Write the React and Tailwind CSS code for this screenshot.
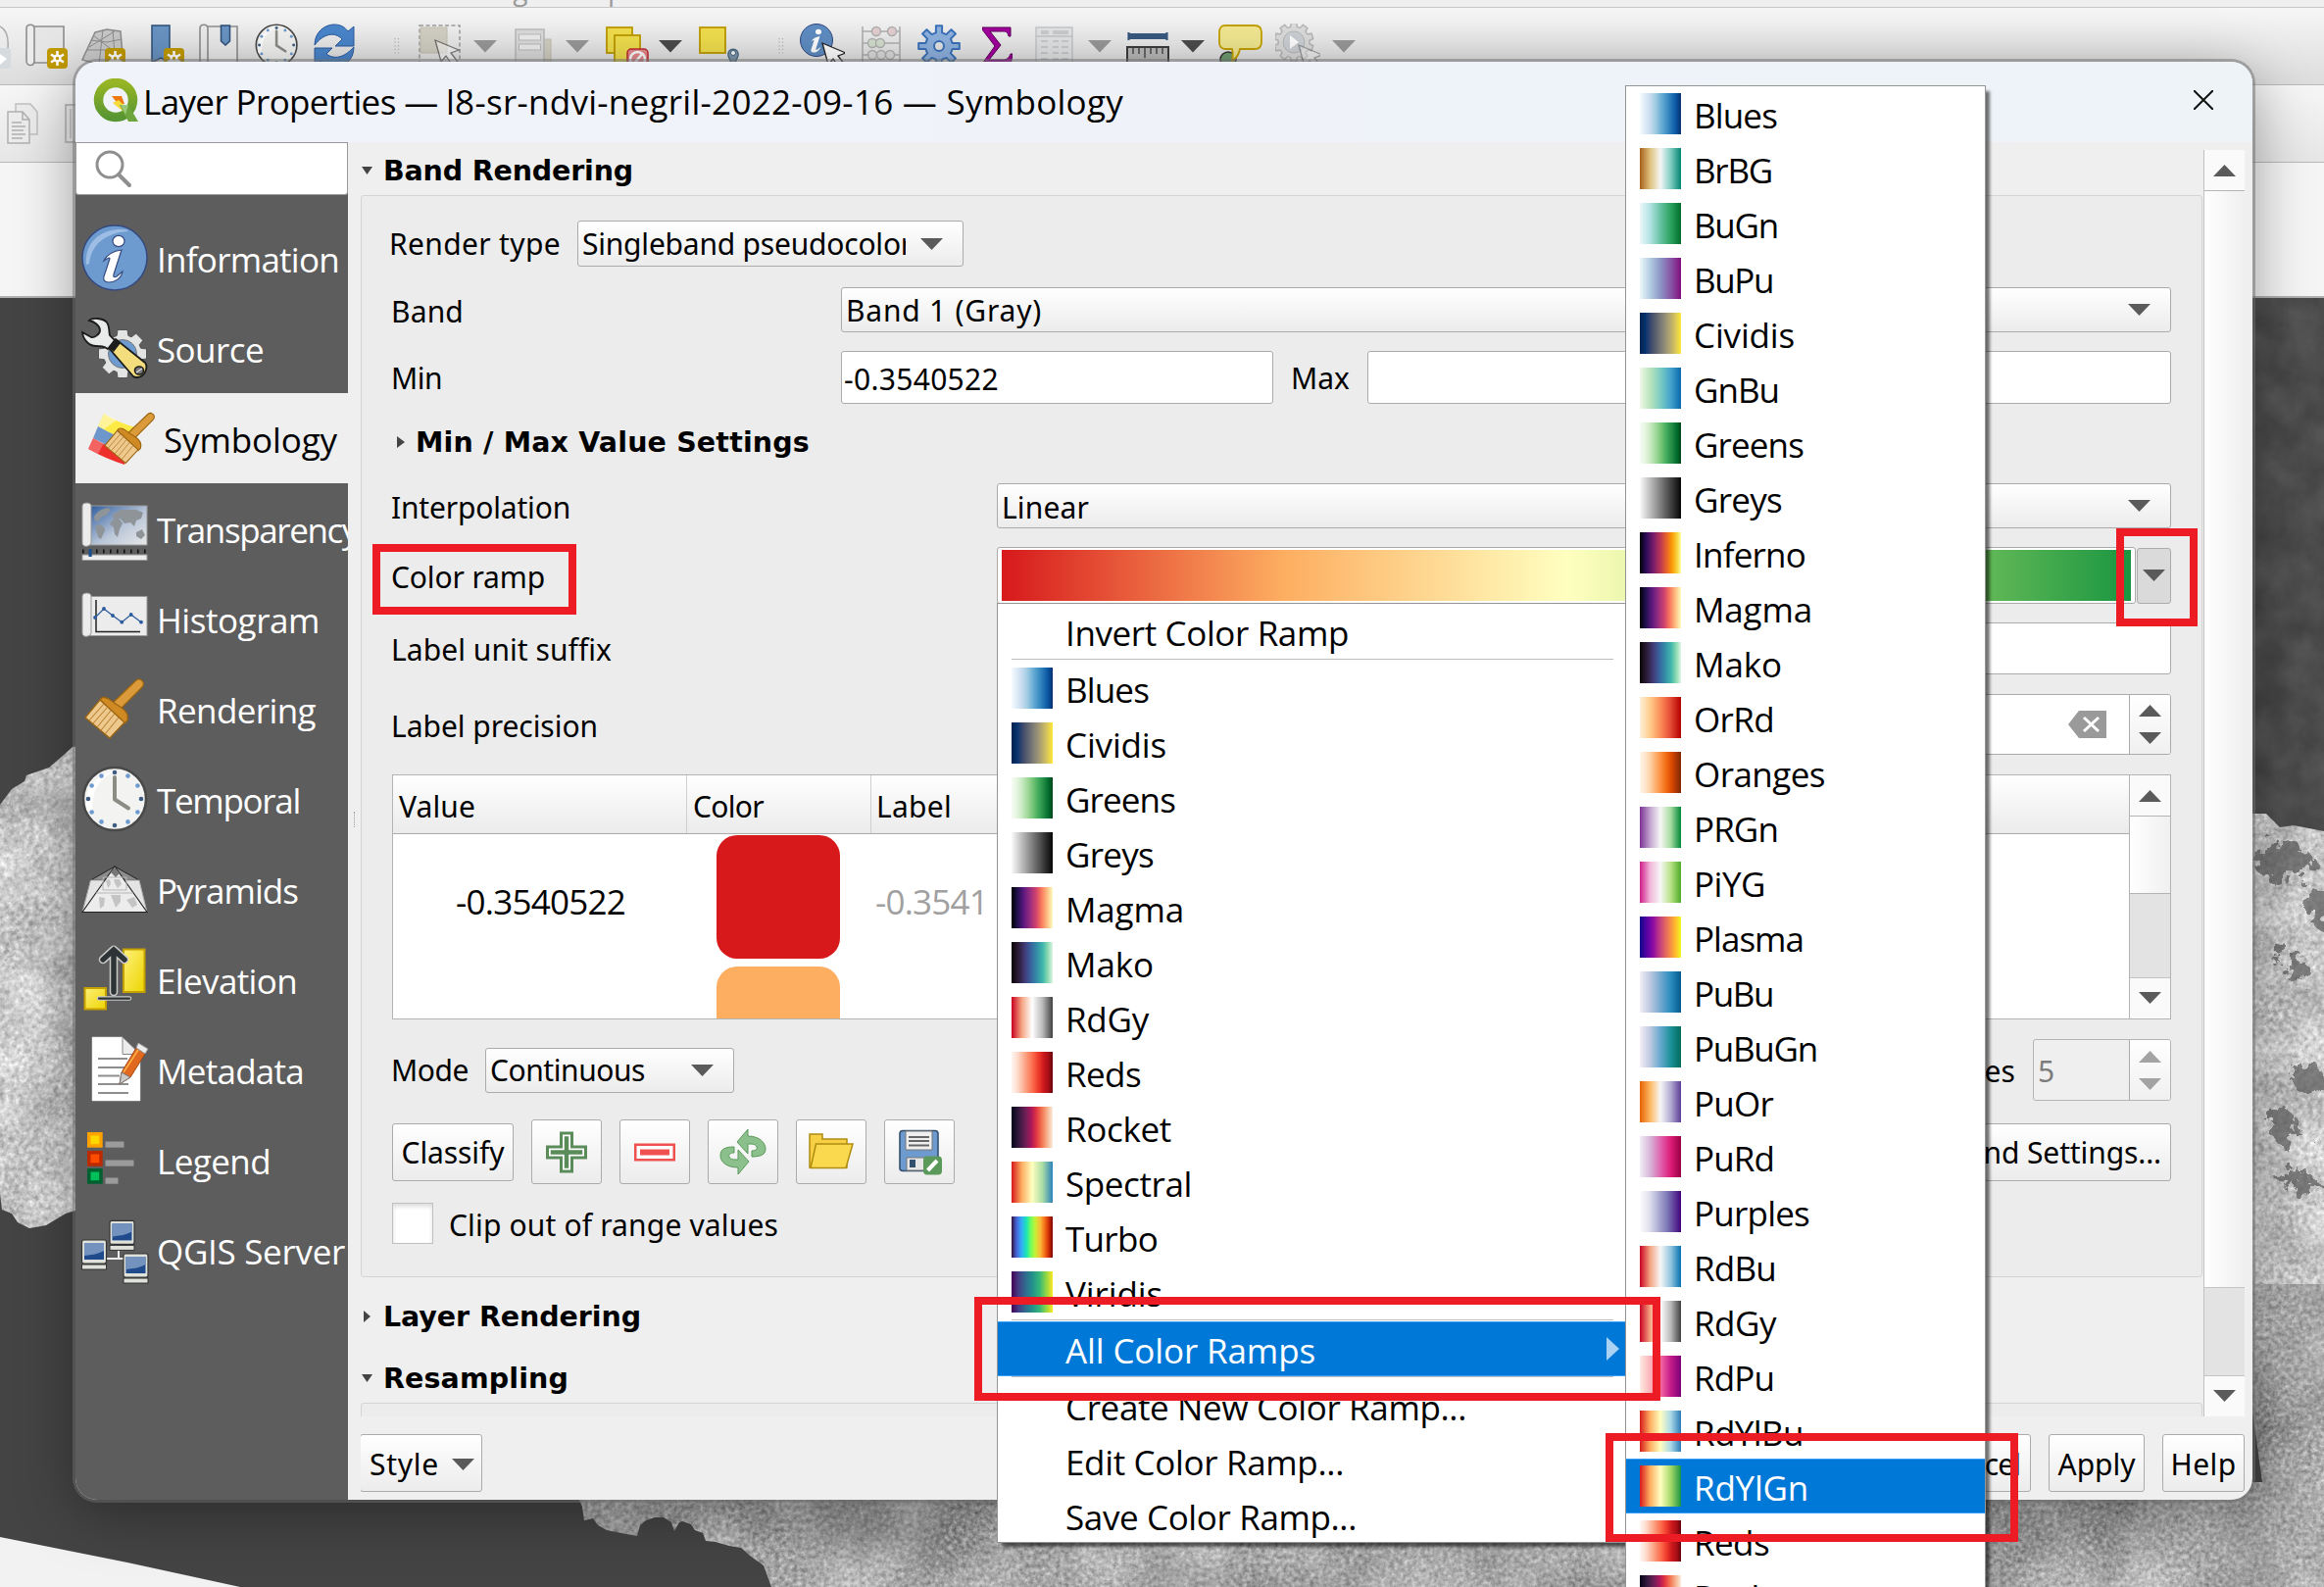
import { useLayoutEffect, useRef, useState } from "react";

const UI = "font-['Noto_Sans',sans-serif] text-[30px] leading-[40px]";
const SEGOE = "font-['Open_Sans',sans-serif] text-[35px] leading-[46px]";
const BOLD = "font-['DejaVu_Sans',sans-serif] text-[28.5px] font-bold";

/* Single line of text whose tracking is adjusted so that it spans `w` pixels. */
function Fit({ w, children, className = "" }) {
  const ref = useRef(null);
  const [ls, setLs] = useState(0);
  useLayoutEffect(() => {
    const natural = ref.current.getBoundingClientRect().width - ls * children.length;
    setLs((w - natural) / children.length);
  }, [w, children]);
  return (
    <span ref={ref} className={"inline-block whitespace-pre shrink-0 " + className} style={{ letterSpacing: ls }}>
      {children}
    </span>
  );
}

const RAMPS = {
  Blues: "#f7fbff,#deebf7 13%,#c6dbef 26%,#9ecae1 39%,#6baed6 52%,#4292c6 65%,#2171b5 78%,#08519c 90%,#08306b",
  BrBG: "#a6611a,#dfc27d 25%,#f5f5f5 50%,#80cdc1 75%,#018571",
  BuGn: "#edf8fb,#b2e2e2 25%,#66c2a4 50%,#2ca25f 75%,#006d2c",
  BuPu: "#edf8fb,#b3cde3 25%,#8c96c6 50%,#8856a7 75%,#810f7c",
  Cividis: "#00224e,#083370 14%,#35456c 25%,#575d6d 37%,#7d7c78 52%,#a59c74 68%,#d2c060 84%,#fee838",
  GnBu: "#f0f9e8,#bae4bc 25%,#7bccc4 50%,#43a2ca 75%,#0868ac",
  Greens: "#f7fcf5,#e5f5e0 13%,#c7e9c0 26%,#a1d99b 39%,#74c476 52%,#41ab5d 65%,#238b45 78%,#006d2c 90%,#00441b",
  Greys: "#fafafa,#050505",
  Inferno: "#000004,#2b0b57 15%,#781c6d 33%,#bb3754 50%,#ed6925 67%,#fb9b06 78%,#f7d13d 90%,#fcffa4",
  Magma: "#000004,#221150 15%,#5f187f 30%,#982d80 45%,#d3436e 60%,#f8765c 72%,#feba80 86%,#fcfdbf",
  Mako: "#0b0405,#2e1e3c 18%,#413d7b 33%,#37659e 48%,#348fa7 62%,#40b7ad 76%,#8ad9b1 88%,#def5e5",
  OrRd: "#fef0d9,#fdcc8a 25%,#fc8d59 50%,#e34a33 75%,#b30000",
  Oranges: "#fff5eb,#fee6ce 13%,#fdd0a2 26%,#fdae6b 39%,#fd8d3c 52%,#f16913 65%,#d94801 78%,#a63603 90%,#7f2704",
  PRGn: "#7b3294,#c2a5cf 25%,#f7f7f7 50%,#a6dba0 75%,#008837",
  PiYG: "#d01c8b,#f1b6da 25%,#f7f7f7 50%,#b8e186 75%,#4dac26",
  Plasma: "#0d0887,#5302a3 16%,#8b0aa5 32%,#b83289 45%,#db5c68 59%,#f48849 73%,#febd2a 87%,#f0f921",
  PuBu: "#f1eef6,#bdc9e1 25%,#74a9cf 50%,#2b8cbe 75%,#045a8d",
  PuBuGn: "#f6eff7,#bdc9e1 25%,#67a9cf 50%,#1c9099 75%,#016c59",
  PuOr: "#e66101,#fdb863 25%,#f7f7f7 50%,#b2abd2 75%,#5e3c99",
  PuRd: "#f1eef6,#d7b5d8 25%,#df65b0 50%,#dd1c77 75%,#980043",
  Purples: "#fcfbfd,#efedf5 13%,#dadaeb 26%,#bcbddc 39%,#9e9ac8 52%,#807dba 65%,#6a51a3 78%,#54278f 90%,#3f007d",
  RdBu: "#ca0020,#f4a582 25%,#f7f7f7 50%,#92c5de 75%,#0571b0",
  RdGy: "#ca0020,#f4a582 25%,#ffffff 50%,#bababa 75%,#404040",
  RdPu: "#feebe2,#fbb4b9 25%,#f768a1 50%,#c51b8a 75%,#7a0177",
  RdYlBu: "#d7191c,#fdae61 25%,#ffffbf 50%,#abd9e9 75%,#2c7bb6",
  RdYlGn: "#d7191c,#fdae61 25%,#ffffc0 50%,#a6d96a 75%,#1a9641",
  Reds: "#fff5f0,#fee0d2 13%,#fcbba1 26%,#fc9272 39%,#fb6a4a 52%,#ef3b2c 65%,#cb181d 78%,#a50f15 90%,#67000d",
  Rocket: "#03051a,#35193e 18%,#701f57 35%,#ad1759 48%,#e13342 60%,#f37651 74%,#f6b48f 87%,#faebdd",
  Spectral: "#d7191c,#fdae61 25%,#ffffbf 50%,#abdda4 75%,#2b83ba",
  Turbo: "#30123b,#4662d7 12%,#36aaf9 24%,#1ae4b6 36%,#72fe5e 47%,#c7ef34 58%,#faba39 70%,#f66b19 81%,#ca2a04 91%,#7a0403",
  Viridis: "#440154,#443a83 16%,#31688e 33%,#21908c 50%,#35b779 68%,#8fd744 84%,#fde725",
};

const FAVORITES = [
  ["Blues", 83], ["Cividis", 101], ["Greens", 110], ["Greys", 88], ["Magma", 119], ["Mako", 88],
  ["RdGy", 83], ["Reds", 75], ["Rocket", 106], ["Spectral", 127], ["Turbo", 92], ["Viridis", 97],
];
const ALL = [
  ["Blues", 83], ["BrBG", 78], ["BuGn", 84], ["BuPu", 79], ["Cividis", 101], ["GnBu", 85], ["Greens", 110],
  ["Greys", 88], ["Inferno", 112], ["Magma", 119], ["Mako", 88], ["OrRd", 80], ["Oranges", 132], ["PRGn", 84],
  ["PiYG", 71], ["Plasma", 110], ["PuBu", 79], ["PuBuGn", 124], ["PuOr", 79], ["PuRd", 80], ["Purples", 116],
  ["RdBu", 82], ["RdGy", 82], ["RdPu", 80], ["RdYlBu", 110], ["RdYlGn", 115], ["Reds", 75], ["Rocket", 106],
];

function MenuItem({ name, w, ramp, selected, children }) {
  return (
    <div
      className={
        "flex h-14 shrink-0 items-center pl-3.5 " +
        (selected ? "border-y border-[#3ba0f5] bg-[#0078d7] text-white" : "text-black")
      }
    >
      <div
        className="h-[42px] w-[42px] shrink-0"
        style={ramp ? { backgroundImage: `linear-gradient(to right, ${RAMPS[name]})` } : undefined}
      />
      <Fit w={w + 2} className="ml-[13px] pt-[3px]">{name}</Fit>
      {children}
    </div>
  );
}

const Rule = ({ className = "" }) => (
  <div className={"mx-3.5 mb-px h-px shrink-0 bg-[#bdbdbd] " + className} />
);

function Tri({ dir = "down", w = 23, h = 12, color = "#5a5a5a", className = "" }) {
  const pts = dir === "down" ? "0,0 24,0 12,12" : dir === "up" ? "0,12 24,12 12,0" : "0,0 24,6 0,12";
  return (
    <svg width={w} height={h} viewBox="0 0 24 12" preserveAspectRatio="none" className={"shrink-0 " + className}>
      <polygon points={pts} fill={color} />
    </svg>
  );
}

const RAISED = "border border-[#ababab] rounded-[3px] bg-linear-to-b from-white to-[#ececec]";
const FIELD = "border border-[#ababab] rounded-[3px] bg-white";

function Combo({ className, children, arrow = "mr-[20px]" }) {
  return (
    <div className={"flex items-center justify-between overflow-hidden pl-[4px] " + RAISED + " " + className}>
      {children}
      <Tri className={arrow} />
    </div>
  );
}

function Spin({ disabled, className = "" }) {
  const c = disabled ? "#a3a3a3" : "#5a5a5a";
  return (
    <div className={"flex h-full w-[42px] flex-col items-center justify-center gap-4 border-l border-[#ababab] bg-linear-to-b from-white to-[#f0f0f0] " + className}>
      <Tri dir="up" color={c} />
      <Tri color={c} />
    </div>
  );
}

/* ---------- sidebar icons, all drawn on a 68 px square ---------- */

const Box = ({ children }) => (
  <svg width="68" height="68" viewBox="0 0 68 68" className="shrink-0 overflow-visible">{children}</svg>
);

const InfoIcon = () => (
  <Box>
    <circle cx="34" cy="34" r="33" fill="#6d9bcf" stroke="#34497f" strokeWidth="1.5" />
    <path d="M5 41C3 20 18 5 40 5c6 0 8 1 8 2C28 8 10 18 8 40z" fill="#a9c6e8" opacity=".8" />
    <ellipse cx="38" cy="17" rx="6" ry="5.6" fill="#fff" stroke="#34497f" strokeWidth="1.2" />
    <path d="M23 37c3-6 10-10 18-11l-8 25c-1 3 1 3 3 2l6-5c-1 7-8 11-14 11-5 0-6-3-5-6l6-18c0-2-3 0-6 2z" fill="#fff" stroke="#34497f" strokeWidth="1.2" />
  </Box>
);

const gear = (n, ro, ri, cx, cy, hw = 0.2) => {
  const p = [];
  for (let i = 0; i < n; i++) {
    const a = (i * 2 * Math.PI) / n - Math.PI / 2;
    [[-hw * 1.5, ri], [-hw, ro], [hw, ro], [hw * 1.5, ri]].forEach(([d, r]) =>
      p.push(`${(cx + r * Math.cos(a + d)).toFixed(1)},${(cy + r * Math.sin(a + d)).toFixed(1)}`)
    );
  }
  return p.join(" ");
};

const SourceIcon = () => (
  <Box>
    <polygon points={gear(8, 25, 19.5, 42, 40)} fill="#e3e5e4" stroke="#555" strokeWidth="1" />
    <circle cx="42" cy="40" r="14.5" fill="#6d9bcf" stroke="#777" strokeWidth="1" />
    <path d="M28 34L35 25 65 49c3 4 1 14-8 15-2 0-3 0-4-1z" fill="#f3dd7c" stroke="#1c1c1c" strokeWidth="1.8" />
    <path d="M35 25l-7 9 5 4 7-9z" fill="#1c1c1c" />
    <path d="M8 6c3-3 14-3 18 2 3 4 2 10 3 13l5 5-7 9c-4-3-7-3-12-3C8 32 2 26 1 18l9 5c3 1 9-3 9-7 0-5-6-9-11-10z" fill="#e9ecea" stroke="#1c1c1c" strokeWidth="1.8" />
    <ellipse cx="59" cy="57" rx="4.5" ry="4" fill="#777" stroke="#1c1c1c" strokeWidth="1.6" />
    <path d="M56 59l6-4" stroke="#ddd" strokeWidth="1.4" />
  </Box>
);

const Brush = () => (
  <g stroke="#9a6410" strokeWidth="1.3">
    <path d="M40 34L62 12c4-5-2-10-6-7L32 28z" fill="#dc9b3b" />
    <path d="M19 25c2-4 5-3 9-1l7 5 6 4c6 4 7 9 6 13l-3 3z" fill="#cf8a24" />
    <path d="M4 43L19 25 44 48 29 64z" fill="#eec98d" />
    <path d="M8 46l15-17M12 49l15-17M16 53l14-17M20 56l14-17M24 60l14-17" stroke="#b98437" strokeWidth="1.1" />
  </g>
);

const SymbologyIcon = () => (
  <Box>
    <path d="M16 9Q30 18 48 23L44 38Q28 32 10 22z" fill="#fdea45" />
    <path d="M16 9L10 22 16 25 30 15z" fill="#fff" opacity=".45" />
    <path d="M10 22Q28 32 44 38L40 50Q22 44 5 34z" fill="#6d96cb" />
    <path d="M5 34Q22 44 40 50L37 61Q18 55 0 45z" fill="#ef2f2c" />
    <path d="M5 34L0 45 10 50 16 39z" fill="#fff" opacity=".25" />
    <g transform="translate(13.5 5) scale(.85)"><Brush /></g>
  </Box>
);

const Scroll = ({ b = 52 }) => (
  <path d={`M1 11c0-4 9-4 9 0v${b - 15}c0 5-9 6-9 1z`} fill="#ececec" stroke="#999" strokeWidth="1" />
);

const Continents = ({ fill }) => (
  <g fill={fill}>
    <path d="M13 22c3-5 8-8 14-9l3 2-5 6-4 1-3 4-4 1zM15 31c4-2 9 1 9 5l-4 9-3-2c0-4-3-6-2-12zM31 26l7-2 4 5-3 6-2 8-3-3-1-7-4-3zM32 20l8-5 16 0 7 3-2 6-5 2-2 6-4-4-6 1-4-5-7 1zM56 38l6-3 3 6-4 4-5-3z" />
  </g>
);

const TransparencyIcon = () => (
  <Box>
    <defs>
      <linearGradient id="tr" x1="0" y1="0" x2="1" y2="1">
        <stop offset="0" stopColor="#2d5b9d" /><stop offset=".55" stopColor="#b9c6d8" /><stop offset="1" stopColor="#e8e8e8" />
      </linearGradient>
    </defs>
    <rect x="9" y="11" width="58" height="40" fill="url(#tr)" stroke="#999" />
    <Continents fill="#8f9499" />
    <Scroll />
    <path d="M1 57.5h66" stroke="#111" strokeWidth="4" strokeDasharray="1.6 5.4" />
    <rect x="1" y="61" width="66" height="5.5" fill="#ececec" stroke="#999" />
    <rect x="7.5" y="55" width="3.2" height="8" fill="#1d4f8f" />
  </Box>
);

const HistogramIcon = () => (
  <Box>
    <rect x="9" y="11.5" width="58" height="40" fill="#ececec" stroke="#999" />
    <Scroll />
    <path d="M15 15v32.500h45" fill="none" stroke="#222" strokeWidth="1.5" />
    <path d="M14 33l9-9 9 7 9.300 6.700L50.700 30 61 37.700" fill="none" stroke="#2d5b9d" strokeWidth="1.3" />
    {[[14, 33], [23, 24], [32, 31], [41.3, 37.700], [50.7, 30], [61, 37.7]].map(([x, y]) => (
      <circle key={x} cx={x} cy={y} r="1.900" fill="#2d5b9d" />
    ))}
  </Box>
);

const RenderingIcon = () => <Box><Brush /></Box>;

const ClockFace = () => (
  <>
    <circle cx="34" cy="34" r="32" fill="#f3f4f2" stroke="#484848" strokeWidth="2.500" />
    <path d="M5 45C3 22 16 8 36 5 20 12 10 22 11 50z" fill="#fff" />
    {Array.from({ length: 12 }, (_, i) => (
      <circle
        key={i}
        cx={34 + 27 * Math.sin((i * Math.PI) / 6)}
        cy={34 - 27 * Math.cos((i * Math.PI) / 6)}
        r="2.300"
        fill={i % 3 ? "#6d9bcf" : "#3e5d80"}
      />
    ))}
    <path d="M34 12v22.500l14 9" fill="none" stroke="#8b8d85" strokeWidth="4" strokeLinecap="round" strokeLinejoin="round" />
  </>
);
const TemporalIcon = () => <Box><ClockFace /></Box>;

const PyramidsIcon = () => (
  <Box>
    <path d="M34 11L9.500 25h49.500z" fill="#8c8c8c" stroke="#222" />
    <path d="M9.500 25L1 57.500h66L59 25z" fill="#e4e4e4" stroke="#aaa" />
    <path d="M34 11L1 57.500h66z" fill="#ececec" stroke="#222" strokeWidth="1.100" />
    <path d="M22 22h24v13H22zM15 38h38" fill="none" stroke="#b5b5b5" />
    <path d="M25 25l4-1 1 5-3 4zM33 24l6 0 2 5-4 4-3-5zM18 42l6 1-1 8-4 3zM30 40l10 0 0 7-5 6-3-8zM46 45l8-3 3 8-5 3z" fill="#c4c4c4" />
    <path d="M30 17l4-5 5 6-4 4z" fill="#777" />
  </Box>
);

const ElevationIcon = () => (
  <Box>
    <defs>
      <linearGradient id="yl" x1="0" y1="0" x2="1" y2="1"><stop offset="0" stopColor="#fff07a" /><stop offset="1" stopColor="#ecd500" /></linearGradient>
    </defs>
    <rect x="43" y="3.500" width="21.500" height="43.500" fill="url(#yl)" stroke="#c4a000" strokeWidth="2" />
    <rect x="3.500" y="43" width="21.500" height="21.500" fill="url(#yl)" stroke="#c4a000" strokeWidth="2" />
    <g fill="none" strokeLinecap="round" strokeLinejoin="round">
      <path d="M33 47V4M22 14L33 4l11 10" stroke="#c9c9c9" strokeWidth="8.500" />
      <path d="M33 47V5M22 14L33 4l11 10" stroke="#2e3436" strokeWidth="5.500" strokeLinejoin="miter" />
      <path d="M18 53.600h31" stroke="#c9c9c9" strokeWidth="4.500" />
      <path d="M18 53.600h31" stroke="#2e3436" strokeWidth="2.300" />
    </g>
  </Box>
);

const MetadataIcon = () => (
  <Box>
    <path d="M11 1h31l18 18v47H11z" fill="#fff" stroke="#ddd" strokeWidth=".5" />
    <path d="M42 1v17.500h18z" fill="#ececec" stroke="#888" />
    <path d="M17 23h30M17 32h27M17 40.500h22M17 49h31M17 58h31" stroke="#8e8e8e" strokeWidth="2" />
    <path d="M39 49l2-12L56 12l9 6-15 24z" fill="#e0691f" stroke="#a4460f" />
    <path d="M43 37l15-23" stroke="#ffb347" strokeWidth="1.500" />
    <path d="M39 49l2-12 9 5z" fill="#c9c9c9" stroke="#777" />
    <path d="M56 12l2-5 10 6-3 5z" fill="#ececec" stroke="#999" />
  </Box>
);

const LegendIcon = () => (
  <Box>
    {[[6, "#ffa200", "#ffd800", 19], [25, "#bd2a00", "#ff4d00", 29], [43, "#00602f", "#00c05a", 13]].map(([y, a, b, l]) => (
      <g key={y}>
        <rect x="6" y={y} width="15.700" height="15.700" fill={a} />
        <rect x="9.500" y={y + 3.5} width="8.700" height="8.700" fill={b} />
        <rect x="24.500" y={y + 9.5} width={l} height="6.200" fill="#9b9b9b" />
      </g>
    ))}
  </Box>
);

const Monitor = ({ x, y }) => (
  <g transform={`translate(${x} ${y})`}>
    <rect x="0" y="0" width="25" height="24" rx="2" fill="#dfe2da" stroke="#333" strokeWidth="1.200" />
    <rect x="2.500" y="3" width="20" height="17" fill="#1f4a8c" />
    <path d="M2.500 3h20v8c-7 4-13 4-20 5z" fill="#7392bd" />
    <rect x="0" y="25" width="25" height="5" fill="#dfe2da" stroke="#333" />
  </g>
);
const ServerIcon = () => (
  <Box>
    <path d="M24 43h20M38 34v9" stroke="#ececec" strokeWidth="2" />
    <Monitor x="29" y="4.400" /><Monitor x=".5" y="24" /><Monitor x="43" y="38" />
  </Box>
);

const PAGES = [
  ["Information", 186, InfoIcon], ["Source", 109, SourceIcon], ["Symbology", 177, SymbologyIcon],
  ["Transparency", 205, TransparencyIcon], ["Histogram", 166, HistogramIcon], ["Rendering", 162, RenderingIcon],
  ["Temporal", 146, TemporalIcon], ["Pyramids", 144, PyramidsIcon], ["Elevation", 143, ElevationIcon],
  ["Metadata", 150, MetadataIcon], ["Legend", 116, LegendIcon], ["QGIS Server", 192, ServerIcon],
];

function Sidebar() {
  return (
    <div className={"flex w-[278px] shrink-0 flex-col overflow-hidden bg-[#5d5d5d] text-white " + SEGOE}>
      <div className="h-[54px] shrink-0 rounded-b-[3px] border border-[#9a9a9a] bg-white pl-[19px] pt-1.5">
        <svg width="40" height="40" viewBox="0 0 40 40" fill="none" stroke="#8f8f8f" strokeWidth="3">
          <circle cx="15" cy="16" r="13" /><path d="M24 26l11 11" strokeWidth="4" strokeLinecap="round" />
        </svg>
      </div>
      <div className="flex flex-col pt-[18px]">
        {PAGES.map(([name, w, Icon]) => {
          const on = name === "Symbology";
          return (
            <div key={name} className={"flex h-[92px] items-center " + (on ? "bg-[#efefef] pl-[13px] text-black" : "pl-1.5")}>
              <Icon />
              <Fit w={w} className="ml-[9px] pt-[3px]">{name}</Fit>
            </div>
          );
        })}
      </div>
    </div>
  );
}

/* ---------- main window toolbar ---------- */

const Star = ({ x, y }) => (
  <g transform={`translate(${x} ${y})`}>
    <rect width="21" height="21" rx="4" fill="#c29b00" />
    <path d="M10.500 3v15M4 6.500l13 8M17 6.500l-13 8" stroke="#fff" strokeWidth="2.600" />
    <circle cx="10.500" cy="10.500" r="4" fill="#fff" /><circle cx="10.500" cy="10.500" r="1.700" fill="#c29b00" />
  </g>
);
const Cursor = ({ x, y, o = 1 }) => (
  <path transform={`translate(${x} ${y})`} opacity={o} d="M0 0l6 22 5-6 7 10 5-4-7-9 8-3z" fill="#fff" stroke="#222" strokeWidth="1.300" />
);
const Ico = ({ w, className = "", children }) => (
  <svg width={w} height="48" viewBox={`0 0 ${w} 48`} className={"shrink-0 " + className}>{children}</svg>
);
const Drop = ({ dark, className }) => (
  <Ico w={24} className={className}><path d="M0 17h24L12 29.500z" fill={dark ? "#4c4c4c" : "#999"} /></Ico>
);
const Grip = ({ className }) => (
  <Ico w={6} className={className}><path d="M1 15v17M4.500 15v17" stroke="#b5b5b5" strokeWidth="1.200" strokeDasharray="1.200 2.400" /></Ico>
);
const SwirlArrows = ({ a = "#4a86cc", b = "#2d5b9d" }) => (
  <g fill={a} stroke={b}>
    <path d="M1 22C1 8 12 1 21 1c7 0 11 3 14 7l6-5v20H22l7-7C22 8 10 10 1 22z" />
    <path d="M41 24c0 14-11 21-20 21-7 0-11-3-14-7l-6 5V25h18l-6 6c8 6 18 4 28-7z" />
  </g>
);

function Toolbar() {
  return (
    <div className="flex h-[79px] items-start border-b border-[#b9b9b9] bg-linear-to-b from-[#f6f6f6] to-[#dcdcdc] pt-4">
      <Ico w={11}>
        <path d="M0 3c6 3 9 10 8 22" fill="none" stroke="#aaa" strokeWidth="1.500" />
        <path d="M0 25h8q3 0 3 4v13q0 4-3 4H0z" fill="#d5dade" /><path d="M0 31l7 5-7 6z" fill="#fff" />
      </Ico>
      <Ico w={44} className="ml-[15px]">
        <path d="M8 3h31v37H8z" fill="#e6e6e6" stroke="#8e8e8e" strokeWidth="1.600" />
        <path d="M1 5c0-5 8-5 8 0v33c0 6-8 6-8 0z" fill="#ececec" stroke="#8e8e8e" strokeWidth="1.600" />
        <Star x={22} y={25} />
      </Ico>
      <Ico w={46} className="ml-[13px]">
        <path d="M14 9l12-3 14 2 3 36-20-1-22-6z" fill="#c9c9c9" stroke="#8e8e8e" strokeWidth="1.500" />
        <path d="M10 17l16 2 15-3M6 27l18 0 18 1M22 6l-4 36M32 7l3 36M12 12l26 20M8 24L34 8" fill="none" stroke="#8e8e8e" />
        <Star x={24} y={25} />
      </Ico>
      <Ico w={35} className="ml-[25px]">
        <path d="M1 2h18v38l-9-5-9 5z" fill="#6a94c4" stroke="#2d4f78" strokeWidth="1.500" /><Star x={13} y={25} />
      </Ico>
      <Ico w={40} className="ml-3.5">
        <path d="M8 3h31v40H8z" fill="#ececec" stroke="#8e8e8e" strokeWidth="1.600" />
        <path d="M1 5c0-5 8-5 8 0v38H1z" fill="#ececec" stroke="#8e8e8e" strokeWidth="1.600" />
        <path d="M22.500 2h9v16l-4.500 4-4.500-4z" fill="#6a94c4" stroke="#2d4f78" strokeWidth="1.500" />
      </Ico>
      <Ico w={44} className="ml-[17px]"><g transform="scale(.65)"><ClockFace /></g></Ico>
      <Ico w={42} className="ml-4"><SwirlArrows /></Ico>
      <Grip className="ml-10" />
      <Ico w={44} className="ml-[19px]">
        <path d="M1 2h41v44H1z" fill="none" stroke="#9c9c9c" strokeWidth="1.500" strokeDasharray="4 2.500" />
        <rect x="2" y="4" width="27" height="26" fill="#d2cfc4" stroke="#c4bfae" />
        <Cursor x={17} y={17} o={0.55} />
      </Ico>
      <Drop className="ml-3" />
      <Ico w={38} className="ml-[18px]">
        <rect x="8" y="16" width="29" height="26" fill="#d2cfc4" stroke="#c4bfae" />
        <rect x="1" y="6" width="29" height="36" fill="#dcdcdc" stroke="#bbb" strokeWidth="1.500" />
        <rect x="4.500" y="11" width="22" height="6" fill="#eee" stroke="#bbb" /><rect x="4.500" y="21" width="22" height="6" fill="#eee" stroke="#bbb" />
      </Ico>
      <Drop className="ml-3.5" />
      <Ico w={44} className="ml-[17px]">
        <rect x="1" y="4" width="26" height="26" fill="#f1df4d" stroke="#bd9a00" strokeWidth="1.800" />
        <rect x="9" y="12" width="26" height="28" fill="#f1df4d" stroke="#bd9a00" strokeWidth="1.800" />
        <rect x="22" y="26" width="21" height="21" rx="4" fill="#e58a8f" stroke="#c0282d" strokeWidth="1.500" />
        <circle cx="32.500" cy="36.500" r="7.500" fill="none" stroke="#fff" strokeWidth="2.500" /><path d="M28 42l9-11" stroke="#fff" strokeWidth="2.500" />
      </Ico>
      <Drop dark className="ml-2.5" />
      <Ico w={42} className="ml-[17px]">
        <rect x="1" y="4" width="26" height="26" fill="#f1df4d" stroke="#bd9a00" strokeWidth="1.800" />
        <path d="M35 45l-5-12c-2-9 12-9 10 0z" fill="#7c97ad" stroke="#47657e" strokeWidth="1.300" /><circle cx="35" cy="30" r="2.500" fill="#fff" stroke="#47657e" />
      </Ico>
      <Grip className="ml-[39px]" />
      <Ico w={46} className="ml-4">
        <g transform="scale(.5)"><circle cx="34" cy="34" r="33" fill="#5f8dc3" stroke="#34497f" strokeWidth="2" /><ellipse cx="38" cy="17" rx="6" ry="5.600" fill="#fff" />
          <path d="M23 37c3-6 10-10 18-11l-8 25c-1 3 1 3 3 2l6-5c-1 7-8 11-14 11-5 0-6-3-5-6l6-18c0-2-3 0-6 2z" fill="#fff" /></g>
        <Cursor x={23} y={20} />
      </Ico>
      <Ico w={40} className="ml-[17px]">
        <path d="M1 3v43M39 3v43M1 8h38M1 20h38M1 32h38" fill="none" stroke="#b0b0b0" strokeWidth="1.600" />
        {[[15, 8, "#e3cfcf"], [31, 8, "#e3cfcf"], [11, 20, "#d5e0d0"], [19, 20, "#d5e0d0"], [11, 32, "#ddd"], [20, 32, "#ddd"], [29, 32, "#ddd"]].map(([x, y, f], i) => (
          <ellipse key={i} cx={x} cy={y} rx="4.500" ry="4.500" fill={f} stroke="#b0b0b0" strokeWidth="1.400" />
        ))}
      </Ico>
      <Ico w={44} className="ml-[17px]">
        <polygon points={gear(8, 21, 14, 22, 23, 0.15)} fill="#8fb2e0" stroke="#3a72ba" strokeWidth="2" strokeLinejoin="round" />
        <circle cx="22" cy="23" r="5" fill="#e6e6e6" stroke="#3a72ba" strokeWidth="2" />
      </Ico>
      <Ico w={31} className="ml-[22px]">
        <path d="M0 4h29v9h-2c-1-4-2-5-6-5H8l11 14L7 37h14c5 0 6-2 8-6h2l-2 12H0v-2l13-18L0 6z" fill="#a3009e" stroke="#5b0058" />
      </Ico>
      <Ico w={40} className="ml-[23px]">
        <rect x="1" y="4" width="37" height="42" fill="#e3e4e5" stroke="#c3c6c9" strokeWidth="1.500" />
        <path d="M1 13h37" stroke="#c3c6c9" strokeWidth="1.500" />
        <path d="M6 9h8M18 9h16" stroke="#c9cbcd" strokeWidth="4" /><path d="M6 18h7M18 18h6M27 18h7M6 24h7M18 24h6M27 24h7M6 30h7M18 30h6M27 30h7M6 36h7M18 36h6M27 36h7" stroke="#c9cbcd" strokeWidth="1.800" />
      </Ico>
      <Drop className="ml-3.5" />
      <Ico w={44} className="ml-[15px]">
        <path d="M2 13h40M2.500 9v8M41.500 9v8" stroke="#39597f" strokeWidth="2.200" /><path d="M3 13h38" stroke="#39597f" strokeWidth="6" />
        <rect x="1" y="24" width="42" height="20" fill="#b9b9b9" stroke="#3d3d3d" strokeWidth="2" />
        <path d="M7 25v6M13 25v6M19 25v10M25 25v6M31 25v6M37 25v6" stroke="#3d3d3d" strokeWidth="1.300" />
      </Ico>
      <Drop dark className="ml-3" />
      <Ico w={45} className="ml-3.5">
        <circle cx="10" cy="37" r="8" fill="#6f9f6f" stroke="#333" strokeWidth="1.500" />
        <path d="M7 2h30q7 0 7 7v10q0 7-7 7H22c-1 6-3 9-8 12 1-5 1-8 0-12H7q-6 0-6-7V9q0-7 6-7z" fill="#f2e891" stroke="#c4a000" strokeWidth="1.800" />
      </Ico>
      <Ico w={46} className="ml-[13px]">
        <polygon points={gear(10, 20, 16, 19, 19, 0.14)} fill="#dcdcdc" stroke="#b8b8b8" strokeWidth="1.500" />
        <circle cx="19" cy="19" r="11" fill="#cdd1d6" stroke="#b8b8b8" /><path d="M15 12l9 7-9 7z" fill="#fff" />
        <Cursor x={24} y={22} o={0.35} />
      </Ico>
      <Drop className="ml-3" />
    </div>
  );
}

/* ---------- satellite raster behind the dialog ---------- */

function MapCanvas() {
  return (
    <svg width="2371" height="1315" viewBox="0 304 2371 1315" className="block shrink-0">
      <defs>
        <filter id="land" x="0" y="0" width="100%" height="100%" colorInterpolationFilters="sRGB">
          <feTurbulence type="fractalNoise" baseFrequency=".012 .01" numOctaves="3" seed="8" result="a" />
          <feTurbulence type="fractalNoise" baseFrequency=".22" numOctaves="4" seed="5" result="b" />
          <feComposite in="a" in2="b" operator="arithmetic" k2=".45" k3=".55" result="n" />
          <feColorMatrix in="n" values=".75 0 0 0 .29  .75 0 0 0 .29  .75 0 0 0 .29  0 0 0 0 1" />
          <feComposite in2="SourceGraphic" operator="in" />
        </filter>
        <filter id="landLight" x="0" y="0" width="100%" height="100%" colorInterpolationFilters="sRGB">
          <feTurbulence type="fractalNoise" baseFrequency=".02" numOctaves="3" seed="15" result="a" />
          <feTurbulence type="fractalNoise" baseFrequency=".2" numOctaves="4" seed="9" result="b" />
          <feComposite in="a" in2="b" operator="arithmetic" k2=".4" k3=".6" result="n" />
          <feColorMatrix in="n" values=".7 0 0 0 .44  .7 0 0 0 .44  .7 0 0 0 .44  0 0 0 0 1" />
          <feComposite in2="SourceGraphic" operator="in" />
        </filter>
        <filter id="sea" x="0" y="0" width="100%" height="100%" colorInterpolationFilters="sRGB">
          <feTurbulence type="fractalNoise" baseFrequency=".03" numOctaves="4" seed="3" />
          <feColorMatrix values=".12 0 0 0 .24  .12 0 0 0 .24  .12 0 0 0 .24  0 0 0 0 1" />
        </filter>
        <filter id="rough"><feTurbulence type="fractalNoise" baseFrequency=".07" numOctaves="4" /><feDisplacementMap in="SourceGraphic" scale="44" /></filter>
      </defs>
      <rect x="0" y="304" width="2371" height="1315" fill="#444" />
      <rect x="2290" y="304" width="81" height="600" filter="url(#sea)" />
      <path filter="url(#landLight)" d="M0 821l12-16 13-8 2-6 23-8 14-12 10-9 13-2v472l-20 6-20 12-17 3-12-6-6-9-10-4-2-16z" />
      <path filter="url(#landLight)" d="M2280 830h32l14 14 14-2 31 6v471h-91z" />
      <path filter="url(#land)" d="M2280 1310h91v309H787l-8-22-14-10-9-8-12-2-14-4-10-1-3-8-8-3-4-6-9-3-3 1-5 9-3-9-8-5-9 0-9 3-6 5-3 11-16-3-15-3-9-5-5-7-9 2-2-14-7-15v-10h1721z" />
      <g fill="#5a5a5a" opacity=".7" filter="url(#rough)">
        <ellipse cx="2330" cy="880" rx="30" ry="20" /><ellipse cx="2370" cy="925" rx="20" ry="20" />
        <ellipse cx="2340" cy="985" rx="12" ry="16" /><ellipse cx="2355" cy="1100" rx="18" ry="16" />
        <ellipse cx="2330" cy="1150" rx="16" ry="16" /><ellipse cx="2345" cy="1205" rx="20" ry="9" />
      </g>
      <path d="M0 1568l130 26 115 25H0z" fill="#f2f2f2" />
    </svg>
  );
}

/* ---------- dialog ---------- */

const LBL = "pl-[30px]";

function ValueTable() {
  const head = "flex h-full items-center border-r border-[#cfcfcf] pl-1.5 pt-1";
  return (
    <div className="ml-[31px] mr-[31px] mt-5 flex h-[250px] shrink-0 overflow-hidden border border-[#b4b4b4] bg-white">
      <div className="flex flex-1 flex-col overflow-hidden">
        <div className="flex h-[60px] shrink-0 border-b border-[#ababab] bg-linear-to-b from-white to-[#ebebeb]">
          <div className={head + " w-[300px]"}><Fit w={78}>Value</Fit></div>
          <div className={head + " w-[188px]"}><Fit w={72}>Color</Fit></div>
          <div className="flex h-full items-center pl-[5px] pt-1"><Fit w={77}>Label</Fit></div>
        </div>
        <div className="flex flex-1 overflow-hidden">
          <div className={"flex w-[300px] justify-end pr-[63px] pt-[46px] " + SEGOE}><Fit w={173}>-0.3540522</Fit></div>
          <div className="flex w-[188px] flex-col items-start gap-2 pl-[30px] pt-px">
            <div className="h-[126px] w-[126px] shrink-0 rounded-[21px] bg-[#d7191c]" />
            <div className="h-[126px] w-[126px] shrink-0 rounded-[21px] bg-[#fdae61]" />
          </div>
          <div className={"pl-[4px] pt-[46px] text-[#a0a0a0] " + SEGOE}><Fit w={115}>-0.3541</Fit></div>
        </div>
      </div>
      <div className="flex w-[42px] shrink-0 flex-col border-l border-[#b4b4b4] bg-[#e3e3e3]">
        <div className="flex h-[42px] items-center justify-center border-b border-[#b4b4b4] bg-[#fafafa]"><Tri dir="up" /></div>
        <div className="h-[79px] border-b border-[#b4b4b4] bg-linear-to-r from-white to-[#f0f0f0]" />
        <div className="h-[85px]" />
        <div className="flex flex-1 items-center justify-center border-t border-[#c4c4c4] bg-[#fafafa]"><Tri className="-mt-0.5" /></div>
      </div>
    </div>
  );
}

const ToolButton = ({ children, className }) => (
  <div className={"flex h-[66px] w-[72px] items-center justify-center " + RAISED + " " + className}>
    <svg width="48" height="48" viewBox="0 0 48 48">{children}</svg>
  </div>
);

function BandRendering() {
  return (
    <div className="mr-px flex h-[1104px] shrink-0 flex-col rounded-[3px] border border-[#d4d4d4] bg-[#ececec]">
      <div className={"mt-[25px] flex h-[47px] items-center " + LBL}>
        <Fit w={175} className="-ml-0.5 pt-px">Render type</Fit>
        <Combo className="ml-[17px] h-[47px] w-[394px]">
          <div className="w-[330px] overflow-hidden pt-px"><Fit w={337}>Singleband pseudocolor</Fit></div>
        </Combo>
      </div>
      <div className={"mt-[21px] flex h-[46px] items-center " + LBL}>
        <div className="w-[459px] pt-[3px]"><Fit w={74}>Band</Fit></div>
        <Combo className="h-[46px] w-[1357px]"><Fit w={200} className="pt-0.5">Band 1 (Gray)</Fit></Combo>
      </div>
      <div className={"mt-[19px] flex h-[54px] items-center " + LBL}>
        <div className="w-[459px] pt-0.5"><Fit w={52}>Min</Fit></div>
        <div className={"flex h-[54px] w-[441px] items-center pl-0.5 pt-[3px] " + FIELD}><Fit w={158}>-0.3540522</Fit></div>
        <Fit w={60} className="ml-[18px] pt-0.5">Max</Fit>
        <div className={"ml-[18px] h-[54px] w-[820px] " + FIELD} />
      </div>
      <div className={"mt-[17px] flex h-[46px] items-center pl-9 " + BOLD}>
        <Tri dir="right" w={8} h={12} color="#444" className="-mt-0.5 mr-[11px]" />
        <Fit w={402} className="pb-px">Min / Max Value Settings</Fit>
      </div>
      <div className={"mt-[18px] flex h-[46px] items-center " + LBL}>
        <div className="w-[618px] pt-1"><Fit w={183}>Interpolation</Fit></div>
        <Combo className="h-[46px] w-[1198px]"><Fit w={89} className="pt-[3px]">Linear</Fit></Combo>
      </div>
      <div className={"mt-[19px] flex h-[58px] items-center " + LBL}>
        <div className="w-[618px] pt-1"><Fit w={157}>Color ramp</Fit></div>
        <div className={"h-[58px] w-[1162px] px-1 py-0.5 " + FIELD}>
          <div className="h-full" style={{ backgroundImage: `linear-gradient(to right, ${RAMPS.RdYlGn})` }} />
        </div>
        <div className="ml-px flex h-[57px] w-[35px] items-center justify-center rounded-[3px] border border-[#ababab] bg-[#dadada]"><Tri /></div>
      </div>
      <div className={"mt-[19px] flex h-[53px] items-center " + LBL}>
        <div className="w-[618px] pt-[3px]"><Fit w={225}>Label unit suffix</Fit></div>
        <div className={"h-[53px] w-[1198px] " + FIELD} />
      </div>
      <div className={"mt-5 flex h-[62px] items-center " + LBL}>
        <div className="w-[618px] pt-1"><Fit w={211}>Label precision</Fit></div>
        <div className={"flex h-[62px] w-[1198px] items-center justify-end overflow-hidden " + FIELD}>
          <svg width="40" height="30" viewBox="0 0 40 30" className="mr-[22px]">
            <path d="M0 15L11 1h28v28H11z" fill="#9a9a9a" /><path d="M16 8l15 14M31 8L16 22" stroke="#fff" strokeWidth="3" />
          </svg>
          <Spin />
        </div>
      </div>
      <ValueTable />
      <div className={"mt-5 flex h-[63px] shrink-0 items-center justify-between pr-[31px] " + LBL}>
        <div className="flex items-center">
          <Fit w={79} className="pt-px">Mode</Fit>
          <Combo className="ml-[17px] h-[46px] w-[254px]"><Fit w={158}>Continuous</Fit></Combo>
        </div>
        <div className="flex items-center">
          <Fit w={104} className="mr-[18px] pt-0.5">Classes</Fit>
          <div className="flex h-[63px] w-[141px] items-center justify-between overflow-hidden rounded-[3px] border border-[#b4b4b4] bg-[#efefef] pl-1 text-[#7c7c7c]">
            <span className="pt-0.5">5</span>
            <Spin disabled />
          </div>
        </div>
      </div>
      <div className="mt-[19px] flex h-[66px] shrink-0 items-center pl-[31px] pr-[31px]">
        <div className={"flex h-[59px] w-[124px] items-center justify-center pt-0.5 " + RAISED}><Fit w={105}>Classify</Fit></div>
        <ToolButton className="ml-[18px]">
          <path d="M17 3.500h14v14h14v14H31v14H17v-14H3v-14h14z" fill="#5a8c5a" /><path d="M20 6.500h8v14h14v8H28v14h-8v-14H6v-8h14z" fill="#fff" />
          <path d="M22.500 9h3v14h14v3h-14v14h-3V26h-14v-3h14z" fill="#5a8c5a" stroke="#5a8c5a" strokeWidth="1.500" />
        </ToolButton>
        <ToolButton className="ml-[18px]">
          <path d="M3 15.500h42v18H3z" fill="#f05050" /><path d="M5.500 18h37v13h-37z" fill="#fff" /><path d="M9 21.500h30v6H9z" fill="#f05050" />
        </ToolButton>
        <ToolButton className="ml-[18px]">
          <g fill="#8bbf8b" stroke="#5a995a" strokeWidth="1">
            <path d="M18 14L29 1v7c12 0 18 7 18 13s-5 8-14 8v-6c4 0 6-2 5-4-1-3-5-3-9-3v10z" />
            <path d="M30 34L19 47v-7C7 40 1 34 1 28c0-7 5-9 14-9v6c-4 0-6 2-5 4 1 3 5 3 9 3V22z" />
          </g>
        </ToolButton>
        <ToolButton className="ml-[18px]">
          <path d="M2 6h13v5h25v29H2z" fill="#f6cf45" stroke="#b08c10" strokeWidth="1.500" /><path d="M8.500 16H46l-7 24.500H3z" fill="#fbd94f" stroke="#b08c10" strokeWidth="1.500" />
        </ToolButton>
        <ToolButton className="ml-[18px]">
          <rect x="4" y="2.500" width="39" height="41" rx="3" fill="#6d9bcf" stroke="#34506f" strokeWidth="1.600" />
          <path d="M10 3h27v19H10z" fill="#efefef" stroke="#777" /><path d="M13 9h21M13 13h21M13 17.500h21" stroke="#666" strokeWidth="1.800" />
          <rect x="11" y="30" width="20" height="13" fill="#e6e6e6" stroke="#777" /><rect x="14" y="32" width="6" height="8" fill="#34506f" />
          <rect x="28" y="28.500" width="19" height="19" rx="4" fill="#5a995a" /><path d="M32.500 43L42 33" stroke="#fff" strokeWidth="4" />
        </ToolButton>
        <div className={"ml-auto flex h-[59px] items-center px-[9px] pt-0.5 " + RAISED}><Fit w={249}>Legend Settings...</Fit></div>
      </div>
      <div className="mt-[19px] flex h-[42px] shrink-0 items-center pl-[31px]">
        <div className="h-[42px] w-[42px] border border-[#c0c0c0] bg-white shadow-[inset_0_3px_4px_#ddd]" />
        <Fit w={336} className="ml-[16px] pt-[3px]">Clip out of range values</Fit>
      </div>
    </div>
  );
}

const Heading = ({ open, w, children, className }) => (
  <div className={"flex shrink-0 items-center pl-px " + BOLD + " " + className}>
    <div className="w-[22px] shrink-0">
      {open ? <Tri w={11} h={8} color="#444" className="-mt-1" /> : <Tri dir="right" w={7} h={12} color="#444" className="-mt-1 ml-0.5" />}
    </div>
    <Fit w={w} className="pb-[3px]">{children}</Fit>
  </div>
);

const FootButton = ({ children, w, className }) => (
  <div className={"flex h-[59px] items-center justify-center pt-0.5 " + RAISED + " " + className}><Fit w={w}>{children}</Fit></div>
);

function Dialog() {
  return (
    <div className="absolute left-[77px] top-[63px] flex h-[1467px] w-[2221px] flex-col overflow-hidden rounded-[22px] bg-[#efefef] text-black">
      <div className="flex h-[82px] shrink-0 items-center justify-between bg-linear-to-r from-[#f0f3fa] to-[#eef3f8] pl-[18px] pr-10">
        <div className={"flex items-center pb-[3px] " + SEGOE}>
          <svg width="47" height="46" viewBox="0 0 47 46" className="shrink-0">
            <defs><linearGradient id="q" x1="0" y1="0" x2="0" y2="1"><stop offset="0" stopColor="#97b524" /><stop offset="1" stopColor="#589632" /></linearGradient></defs>
            <circle cx="23" cy="22" r="17.500" fill="none" stroke="url(#q)" strokeWidth="9.500" />
            <path d="M19 18h10l3 8-6 1z" fill="#ee7913" /><path d="M20 25l6-3 5 5 0 7z" fill="#f5dc3c" />
            <path d="M27 27h9l10 17H36z" fill="#6ea53c" /><path d="M28 27h8l-3 10z" fill="#9cc97a" />
          </svg>
          <div className="ml-1 flex pt-[3px]">
            <Fit w={309}>{"Layer Properties — "}</Fit>
            <Fit w={691}>l8-sr-ndvi-negril-2022-09-16 — Symbology</Fit>
          </div>
        </div>
        <svg width="20" height="20" viewBox="0 0 20 20" className="mb-1"><path d="M0 0l20 20M20 0L0 20" stroke="#111" strokeWidth="2" /></svg>
      </div>
      <div className="flex flex-1 overflow-hidden">
        <Sidebar />
        <div className="flex w-[13px] shrink-0 items-center justify-center pb-1">
          <div className="h-4 w-px border-l border-dotted border-[#999]" />
        </div>
        <div className={"flex flex-1 flex-col overflow-hidden " + UI}>
          <div className="flex h-[1300px] shrink-0 overflow-hidden">
            <div className="flex flex-1 flex-col overflow-hidden">
              <Heading open w={255} className="h-[54px] pt-[8px]">Band Rendering</Heading>
              <BandRendering />
              <Heading w={263} className="mt-1 h-[70px] pt-1.5">Layer Rendering</Heading>
              <Heading open w={189} className="h-[54px] pt-2">Resampling</Heading>
              <div className="mr-px h-10 shrink-0 rounded-[3px] border border-[#d4d4d4] bg-[#ececec]" />
            </div>
            <div className="mt-2 flex w-[42px] shrink-0 flex-col border-l border-[#c0c0c0] bg-[#e3e3e3]">
              <div className="flex h-[42px] items-center justify-center border-b border-[#b4b4b4] bg-[#fafafa]"><Tri dir="up" /></div>
              <div className="h-[1119px] border-b border-[#c4c4c4] bg-linear-to-r from-white to-[#efefef]" />
              <div className="flex-1" />
              <div className="flex h-[42px] items-center justify-center border-t border-[#c4c4c4] bg-[#fafafa]"><Tri className="-mt-0.5" /></div>
            </div>
            <div className="w-2 shrink-0" />
          </div>
          <div className="flex flex-1 items-start pr-2 pt-[18px]">
            <div className={"-ml-px flex h-[59px] w-[125px] items-center justify-between pl-[9px] pr-[7px] pt-0.5 " + RAISED}>
              <Fit w={71}>Style</Fit><Tri />
            </div>
            <FootButton w={88} className="ml-auto w-[110px]">Cancel</FootButton>
            <FootButton w={79} className="ml-[18px] w-[98px]">Apply</FootButton>
            <FootButton w={67} className="ml-[18px] w-[84px]">Help</FootButton>
          </div>
        </div>
      </div>
    </div>
  );
}

const Mark = ({ className }) => <div className={"absolute border-8 border-[#ed1c24] " + className} />;

export default function App() {
  return (
    <div className="relative flex h-[1619px] w-[2371px] flex-col overflow-hidden bg-[#efefef]">
      <div className="flex h-[7px] shrink-0 items-end gap-[38px] overflow-hidden pl-[394px] font-['Open_Sans',sans-serif] text-[28px] leading-[38px] text-[#9a9a9a]">
        <Fit w={145} className="-mb-px">Processing</Fit>
        <Fit w={60} className="-mb-px">Help</Fit>
      </div>
      <div className="h-px shrink-0 bg-[#c8c8c8]" />
      <Toolbar />
      <div className="flex h-[79px] shrink-0 items-center border-b border-[#b9b9b9] bg-linear-to-b from-[#f6f6f6] to-[#e6e6e6] pl-[7px]">
        <svg width="70" height="42" viewBox="0 0 70 42" fill="#ececec" stroke="#c0c0c0" strokeWidth="1.500">
          <path d="M9 1h15l7 8v23H9z" /><path d="M1 9h15l7 8v24H1z" stroke="#b0b0b0" /><path d="M16 9v8h7M5 20h10M5 24h14M5 28h12M5 32h14M5 36h11" fill="none" stroke="#b0b0b0" />
          <rect x="60" y="2" width="22" height="38" stroke="#b0b0b0" /><path d="M65 6v30" />
        </svg>
      </div>
      <div className="h-[138px] shrink-0 border-b-2 border-[#b0b0b0] bg-[#f5f5f5]" />
      <MapCanvas />

      <div className="absolute left-[77px] top-[63px] h-[1467px] w-[2221px] rounded-[22px] shadow-[0_0_0_3px_rgba(110,110,110,0.5),0_12px_60px_rgba(0,0,0,0.38)]" />
      <Dialog />

      <div className={"absolute left-[1017px] top-[615px] flex h-[959px] w-[644px] flex-col border border-[#949494] bg-white shadow-[5px_5px_3px_-1px_rgba(0,0,0,0.55)] " + SEGOE}>
        <MenuItem name="Invert Color Ramp" w={287} />
        <Rule />
        {FAVORITES.map(([n, w]) => <MenuItem key={n} name={n} w={w} ramp />)}
        <Rule />
        <MenuItem name="All Color Ramps" w={253} selected>
          <Tri dir="right" w={13} h={24} color="#a9d2f4" className="ml-auto mr-2" />
        </MenuItem>
        <Rule />
        <MenuItem name="Create New Color Ramp..." w={407} />
        <MenuItem name="Edit Color Ramp..." w={282} />
        <MenuItem name="Save Color Ramp..." w={295} />
      </div>

      <div className={"absolute left-[1658px] top-[87px] flex h-[1600px] w-[368px] flex-col border border-[#949494] bg-white shadow-[5px_5px_3px_-1px_rgba(0,0,0,0.55)] " + SEGOE}>
        {ALL.map(([n, w]) => <MenuItem key={n} name={n} w={w} ramp selected={n === "RdYlGn"} />)}
      </div>

      <Mark className="left-[380px] top-[555px] h-[72px] w-[208px]" />
      <Mark className="left-[2159px] top-[539px] h-[100px] w-[83px]" />
      <Mark className="left-[994px] top-[1323px] h-[106px] w-[700px]" />
      <Mark className="left-[1638px] top-[1462px] h-[111px] w-[421px]" />
    </div>
  );
}
